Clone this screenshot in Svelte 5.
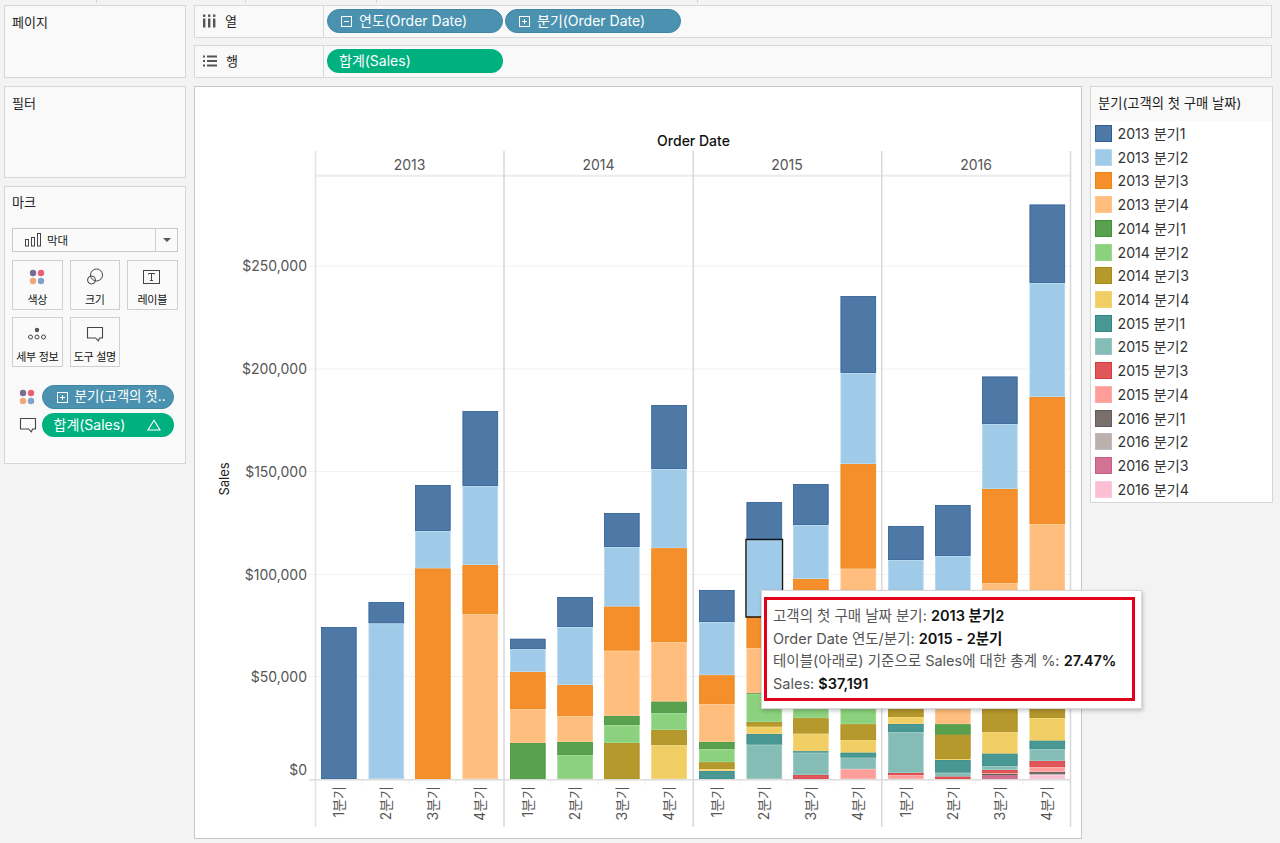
<script>
  const palette = [
    ['#4e79a7', '#2c5d94'], ['#a0cbe8', '#b4d6ee'], ['#f48f2c', '#ee8413'], ['#ffbe7d', '#ffc68d'],
    ['#59a14f', '#41923a'], ['#8cd17d', '#9ad98d'], ['#b6992d', '#a98b14'], ['#f1ce63', '#f3d475'],
    ['#499894', '#2d8884'], ['#86bcb6', '#98c6c1'], ['#e15759', '#d63c3f'], ['#ff9d9a', '#ffaba8'],
    ['#79706e', '#655b59'], ['#bab0ac', '#c3bab7'], ['#d37295', '#c95c84'], ['#fabfd2', '#fbcbda']
  ];
  const legend = ['2013', '2014', '2015', '2016'].flatMap((y) =>
    [1, 2, 3, 4].map((q) => `${y} 분기${q}`)
  );
  const BASE = 779;
  const raw = [
    [321, [[0, 627]]],
    [368.5, [[0, 602], [1, 623.5]]],
    [415, [[0, 485], [1, 531], [2, 568.5]]],
    [462.5, [[0, 411], [1, 486], [2, 565], [3, 614]]],
    [510, [[0, 638.7], [1, 649.3], [2, 672], [3, 709], [4, 743]]],
    [557.3, [[0, 597], [1, 627], [2, 685], [3, 716], [4, 742], [5, 755]]],
    [604, [[0, 513], [1, 547], [2, 606.7], [3, 650.7], [4, 716], [5, 725.3], [6, 743]]],
    [651.3, [[0, 405], [1, 469], [2, 548.3], [3, 642], [4, 701.7], [5, 713.3], [6, 730], [7, 745.3]]],
    [699, [[0, 590], [1, 622], [2, 675.3], [3, 704], [4, 742], [5, 749.3], [6, 762.3], [7, 769], [8, 771]]],
    [746.5, [[0, 502], [1, 539.3], [2, 616.5], [3, 648.3], [4, 693.3], [5, 694], [6, 722], [7, 726.7], [8, 734], [9, 744.7]]],
    [793, [[0, 484], [1, 525], [2, 579], [3, 600], [4, 680], [5, 695], [6, 718.3], [7, 733.7], [8, 751.3], [9, 752.7], [10, 775]]],
    [840.5, [[0, 296], [1, 373], [2, 464], [3, 568.7], [4, 650], [5, 690], [6, 724.3], [7, 740], [8, 752.7], [9, 757.7], [11, 769.3]]],
    [888, [[0, 526], [1, 560], [2, 600], [3, 640], [6, 690], [7, 717], [8, 724], [9, 732.3], [10, 773], [11, 775]]],
    [935, [[0, 505], [1, 556], [2, 600], [3, 650], [4, 724.3], [6, 734.7], [7, 759], [8, 760], [9, 772.7], [10, 776.7]]],
    [982, [[0, 376.5], [1, 424], [2, 489], [3, 583], [6, 690], [7, 732.3], [8, 753.7], [9, 766], [10, 770], [11, 773], [12, 774], [14, 775.5]]],
    [1029.5, [[0, 204.5], [1, 283], [2, 397], [3, 524], [6, 640], [7, 718], [8, 740.7], [9, 749.3], [10, 761], [11, 767], [12, 772], [13, 774], [15, 775]]]
  ];
  const segments = raw.flatMap(([x, segs]) =>
    segs.map(([c, top], i) => {
      const bottom = i + 1 < segs.length ? segs[i + 1][1] : BASE;
      return { x, y: top, h: bottom - top, fill: palette[c][0], stroke: palette[c][1] };
    })
  );
  const ticks = [
    ['$250,000', 266, 5], ['$200,000', 369, 5], ['$150,000', 471.5, 5], ['$100,000', 574.5, 5], ['$50,000', 676.5, 5], ['$0', 779, -4]
  ];
  const years = [['2013', 409.5], ['2014', 598.5], ['2015', 787], ['2016', 976]];
  const dividers = [[315.5, '#e2e2e2'], [504, '#d8d8d8'], [693.3, '#d8d8d8'], [881.8, '#d8d8d8'], [1070.5, '#d8d8d8']];
  const quarterX = [339, 386, 433, 480, 528, 575, 622, 669, 717, 764, 811, 858, 906, 953, 1000, 1047];
  const axisTicks = [362, 409, 456, 551, 598, 645, 740, 787, 834, 929, 976, 1023];
</script>

{#snippet colorDots(size)}
  <svg class="dots" width={size} height={size} viewBox="0 0 16 16" aria-hidden="true">
    <circle cx="4" cy="4" r="3.2" fill="#7b6a94" />
    <circle cx="12" cy="4" r="3.2" fill="#e8606e" />
    <circle cx="4" cy="12" r="3.2" fill="#f0a878" />
    <circle cx="12" cy="12" r="3.2" fill="#7fa3cc" />
  </svg>
{/snippet}

{#snippet bubble(size)}
  <svg width={size} height={size} viewBox="0 0 18 18" fill="none" stroke="#444" stroke-width="1.1" aria-hidden="true">
    <path d="M1.5 2.5h15v10.5h-3l-1.2 3-2.6-3H1.5z" stroke-linejoin="round" />
  </svg>
{/snippet}

<div class="page">
  <div class="strip">
    <span class="s1"></span><span class="s2"></span><span class="s3"></span><span class="s4"></span>
  </div>
  <div class="main">
    <aside class="left">
      <section class="panel pages"><h2>페이지</h2></section>
      <section class="panel filters"><h2>필터</h2></section>
      <section class="panel marks">
        <h2>마크</h2>
        <div class="select">
          <svg class="bars-ico" width="16" height="14" viewBox="0 0 16 14" fill="none" stroke="#444" aria-hidden="true">
            <rect x="0.5" y="6.5" width="3" height="6.5" /><rect x="6.5" y="4.5" width="3" height="8.5" /><rect x="12.5" y="0.5" width="3" height="12.5" />
          </svg>
          <span class="sel-text">막대</span>
          <span class="caret"><i></i></span>
        </div>
        <div class="cards">
          <div class="card">
            <span class="ico">{@render colorDots(16)}</span><span>색상</span>
          </div>
          <div class="card">
            <span class="ico">
              <svg width="18" height="18" viewBox="0 0 18 18" fill="none" stroke="#444" stroke-width="1" aria-hidden="true">
                <circle cx="10.5" cy="7" r="6" /><circle cx="5.5" cy="12" r="4" />
              </svg>
            </span><span>크기</span>
          </div>
          <div class="card">
            <span class="ico">
              <svg width="18" height="16" viewBox="0 0 18 16" fill="none" stroke="#444" stroke-width="1" aria-hidden="true">
                <rect x="0.5" y="1.5" width="16" height="13" />
                <path d="M5.5 5.5v-1h6v1M8.5 4.5v7M7 11.5h3" />
              </svg>
            </span><span>레이블</span>
          </div>
          <div class="card">
            <span class="ico">
              <svg width="20" height="14" viewBox="0 0 20 14" fill="none" stroke="#444" stroke-width="1" aria-hidden="true">
                <circle cx="10" cy="3" r="2.2" fill="#555" stroke="none" />
                <circle cx="3.5" cy="10" r="2" /><circle cx="10" cy="10" r="2" /><circle cx="16.5" cy="10" r="2" />
              </svg>
            </span><span>세부 정보</span>
          </div>
          <div class="card">
            <span class="ico">{@render bubble(18)}</span><span>도구 설명</span>
          </div>
        </div>
        <div class="mark-row">
          <span class="mark-ico">{@render colorDots(16)}</span>
          <span class="pill blue wide">
            <svg class="box" width="11" height="11" viewBox="0 0 11 11" fill="none" stroke="#fff" aria-hidden="true">
              <rect x="0.5" y="0.5" width="10" height="10" /><path d="M3 5.5h5M5.5 3v5" />
            </svg>
            <span>분기(고객의 첫..</span>
          </span>
        </div>
        <div class="mark-row">
          <span class="mark-ico">{@render bubble(18)}</span>
          <span class="pill green wide sales">
            <span>합계(Sales)</span>
            <svg width="14" height="12" viewBox="0 0 14 12" fill="none" stroke="#fff" stroke-width="1.1" aria-hidden="true">
              <path d="M7 1.2 13 11H1z" />
            </svg>
          </span>
        </div>
      </section>
    </aside>

    <div class="right">
      <div class="shelf">
        <div class="shelf-label">
          <svg width="13" height="14" viewBox="0 0 13 14" fill="#555" aria-hidden="true">
            <rect x="0" y="0.5" width="2.4" height="2.4" /><rect x="0" y="4.5" width="2.4" height="9" />
            <rect x="5" y="0.5" width="2.4" height="2.4" /><rect x="5" y="4.5" width="2.4" height="9" />
            <rect x="10" y="0.5" width="2.4" height="2.4" /><rect x="10" y="4.5" width="2.4" height="9" />
          </svg>
          <span>열</span>
        </div>
        <div class="shelf-pills">
          <span class="pill blue">
            <svg class="box" width="11" height="11" viewBox="0 0 11 11" fill="none" stroke="#fff" aria-hidden="true">
              <rect x="0.5" y="0.5" width="10" height="10" /><path d="M3 5.5h5" />
            </svg>
            <span>연도(Order Date)</span>
          </span>
          <span class="pill blue">
            <svg class="box" width="11" height="11" viewBox="0 0 11 11" fill="none" stroke="#fff" aria-hidden="true">
              <rect x="0.5" y="0.5" width="10" height="10" /><path d="M3 5.5h5M5.5 3v5" />
            </svg>
            <span>분기(Order Date)</span>
          </span>
        </div>
      </div>
      <div class="shelf">
        <div class="shelf-label">
          <svg width="14" height="12" viewBox="0 0 14 12" fill="#555" aria-hidden="true">
            <rect x="0" y="0.5" width="2" height="2" /><rect x="0" y="5" width="2" height="2" /><rect x="0" y="9.5" width="2" height="2" />
            <rect x="4" y="0.5" width="10" height="2" /><rect x="4" y="5" width="10" height="2" /><rect x="4" y="9.5" width="10" height="2" />
          </svg>
          <span>행</span>
        </div>
        <div class="shelf-pills">
          <span class="pill green"><span>합계(Sales)</span></span>
        </div>
      </div>

      <div class="content">
        <div class="view">
          <svg class="chart" width="886" height="751" viewBox="195 87 886 751" role="img" aria-label="Sales chart">
            {#each ticks.slice(0, 5) as [, y]}
              <line x1="309" x2="1070" y1={y} y2={y} stroke="#f2f2f2" stroke-width="1.2" />
            {/each}
            <line x1="315" x2="1070" y1="175.8" y2="175.8" stroke="#ececec" stroke-width="2" />
            {#each dividers as [x, color]}
              <line x1={x} x2={x} y1="151" y2="827" stroke={color} stroke-width="1.5" />
            {/each}
            {#each axisTicks as x}
              <line x1={x} x2={x} y1="780" y2="785" stroke="#eeeeee" />
            {/each}
            {#each segments as s}
              <rect x={s.x + 0.4} y={s.y + 0.4} width="34.8" height={Math.max(s.h - 0.8, 0.2)} fill={s.fill} stroke={s.stroke} stroke-width="0.8" />
            {/each}
            <rect x="746" y="539.5" width="36.5" height="77.5" fill="none" stroke="#111" stroke-width="1.4" />
            <line x1="309" x2="1070" y1="779.8" y2="779.8" stroke="#dcdcdc" stroke-width="1.5" />

            <text class="title" x="693.5" y="146" text-anchor="middle">Order Date</text>
            {#each years as [label, x]}
              <text class="axis" x={x} y="169.5" text-anchor="middle">{label}</text>
            {/each}
            {#each ticks as [label, y, dy]}
              <text class="axis" x="307" y={y + dy} text-anchor="end">{label}</text>
            {/each}
            <text class="ytitle" transform="translate(229 479) rotate(-90)" text-anchor="middle">Sales</text>
            {#each quarterX as x, i}
              <text class="axis" transform="translate({x + 5} 786) rotate(-90)" text-anchor="end">{(i % 4) + 1}분기</text>
            {/each}
          </svg>
          <div class="tooltip">
            <div class="tip-inner">
              <p>고객의 첫 구매 날짜 분기: <b>2013 분기2</b></p>
              <p>Order Date 연도/분기: <b>2015 - 2분기</b></p>
              <p>테이블(아래로) 기준으로 Sales에 대한 총계 %: <b>27.47%</b></p>
              <p>Sales: <b>$37,191</b></p>
            </div>
          </div>
        </div>

        <div class="legend">
          <h3>분기(고객의 첫 구매 날짜)</h3>
          <ul>
            {#each legend as label, i}
              <li>
                <i style="background:{palette[i][0]};border-color:{palette[i][1]}"></i>
                <span>{label}</span>
              </li>
            {/each}
          </ul>
        </div>
      </div>
    </div>
  </div>
</div>

<style>
  :global(body) {
    margin: 0;
    background: #f3f3f3;
    overflow: hidden;
  }
  .page {
    width: 1280px;
    height: 843px;
    overflow: hidden;
    font-family: Inter, "Noto Sans CJK KR", sans-serif;
    color: #222;
    box-sizing: border-box;
  }
  .strip {
    height: 5px;
    display: flex;
    margin-left: 96px;
  }
  .strip span {
    border-left: 1px solid #d6d6d6;
    height: 3px;
  }
  .s1 { width: 148px; }
  .s2 { width: 130px; }
  .s3 { width: 320px; }
  .s4 { width: 100px; }
  .main {
    display: flex;
    gap: 8px;
    padding-left: 4px;
  }
  .left {
    width: 182px;
    display: flex;
    flex-direction: column;
    gap: 8px;
    flex: none;
  }
  .panel {
    box-sizing: border-box;
    border: 1px solid #d6d6d6;
    background: #f9f9f9;
    padding: 8px 7px;
  }
  .panel h2 {
    margin: 0;
    font-size: 13px;
    font-weight: 400;
    line-height: 17px;
    color: #222;
  }
  .pages { height: 73px; }
  .filters { height: 92px; }
  .marks { height: 278px; padding-top: 7px; }
  .select {
    margin-top: 17px;
    height: 24px;
    box-sizing: border-box;
    border: 1px solid #c9c9c9;
    background: #fafafa;
    display: flex;
    align-items: center;
    padding-left: 12px;
    font-size: 11.5px;
  }
  .sel-text { margin-left: 6px; flex: 1; }
  .caret {
    width: 21px;
    height: 100%;
    border-left: 1px solid #d0d0d0;
    display: flex;
    align-items: center;
    justify-content: center;
  }
  .caret i {
    border: 4px solid transparent;
    border-top: 4px solid #555;
    border-bottom: 0;
  }
  .cards {
    margin-top: 8px;
    display: grid;
    grid-template-columns: repeat(3, 50.5px);
    gap: 7px;
  }
  .card {
    height: 50px;
    box-sizing: border-box;
    border: 1px solid #cfcfcf;
    background: #fafafa;
    display: flex;
    flex-direction: column;
    align-items: center;
    font-size: 11px;
    white-space: nowrap;
    letter-spacing: -0.3px;
    line-height: 14px;
    color: #111;
  }
  .ico {
    height: 31px;
    display: flex;
    align-items: center;
    justify-content: center;
    flex: none;
    margin-bottom: 1px;
  }
  .mark-row {
    display: flex;
    align-items: center;
    height: 24px;
    margin-top: 3.5px;
  }
  .mark-row:nth-child(4) { margin-top: 18px; }
  .mark-ico {
    width: 29.5px;
    padding-left: 7px;
    box-sizing: border-box;
    display: flex;
    align-items: center;
    flex: none;
  }
  .pill {
    box-sizing: border-box;
    width: 176px;
    height: 24px;
    border-radius: 12px;
    display: inline-flex;
    align-items: center;
    color: #fff;
    font-size: 14px;
    white-space: nowrap;
    padding-left: 13px;
    flex: none;
    line-height: 1;
  }
  .pill .box { margin-right: 7px; flex: none; }
  .pill.blue {
    background: #4a92b0;
    border: 1px solid #3f86a5;
  }
  .pill.green {
    background: #00b180;
    padding-left: 12px;
  }
  .pill.wide { width: 132px; }
  .pill.wide.blue { padding-left: 14px; font-size: 13.5px; }
  .pill.wide.blue .box { margin-right: 7px; }
  .pill.sales {
    justify-content: space-between;
    padding-right: 13px;
  }
  .right {
    width: 1078px;
    display: flex;
    flex-direction: column;
    flex: none;
  }
  .shelf {
    height: 33px;
    box-sizing: border-box;
    border: 1px solid #d9d9d9;
    background: #f9f9f9;
    display: flex;
    margin-bottom: 7px;
  }
  .shelf-label {
    width: 129px;
    box-sizing: border-box;
    border-right: 1px solid #d9d9d9;
    display: flex;
    align-items: center;
    gap: 9px;
    padding: 0 0 2px 8px;
    font-size: 13px;
    flex: none;
  }
  .shelf-pills {
    display: flex;
    align-items: center;
    gap: 2px;
    padding: 0 0 1px 3px;
  }
  .content {
    display: flex;
    gap: 8px;
    margin-top: 1px;
  }
  .view {
    position: relative;
    width: 888px;
    height: 753px;
    box-sizing: border-box;
    border: 1px solid #c6c6c6;
    background: #fff;
    flex: none;
  }
  .chart { display: block; }
  .chart text { font-family: Inter, "Noto Sans CJK KR", sans-serif; }
  .axis { font-size: 14px; fill: #555; }
  .title { font-size: 14px; fill: #111; font-weight: 500; }
  .ytitle { font-size: 13px; fill: #222; font-weight: 400; }
  .tooltip {
    position: absolute;
    left: 566px;
    top: 503px;
    width: 381px;
    height: 119px;
    box-sizing: border-box;
    padding: 6px 6px 7px 2px;
    background: #fff;
    border: 1px solid #d8d8d8;
    box-shadow: 1px 2px 4px rgba(0, 0, 0, 0.22);
    display: flex;
  }
  .tip-inner {
    flex: 1;
    border: 3px solid #e2001a;
    padding: 5px 0 0 6px;
    font-size: 14.5px;
    line-height: 22.5px;
    color: #555;
    white-space: nowrap;
  }
  .tip-inner p { margin: 0; }
  .tip-inner b { color: #111; font-weight: 600; }
  .legend {
    width: 183px;
    height: 417px;
    box-sizing: border-box;
    border: 1px solid #d6d6d6;
    background: #fff;
    flex: none;
  }
  .legend h3 {
    margin: 0;
    height: 34px;
    box-sizing: border-box;
    background: #f9f9f9;
    padding: 8px 0 0 7px;
    font-size: 13.3px;
    font-weight: 400;
    line-height: 17px;
    color: #222;
    white-space: nowrap;
  }
  .legend ul {
    list-style: none;
    margin: 4px 0 0;
    padding: 0 0 0 4px;
  }
  .legend li {
    height: 23.73px;
    display: flex;
    align-items: flex-start;
    font-size: 14.2px;
    line-height: 17px;
    color: #333;
    white-space: nowrap;
  }
  .legend li i {
    width: 17px;
    height: 17px;
    box-sizing: border-box;
    border: 1px solid;
    margin-right: 5.5px;
    flex: none;
  }
</style>
